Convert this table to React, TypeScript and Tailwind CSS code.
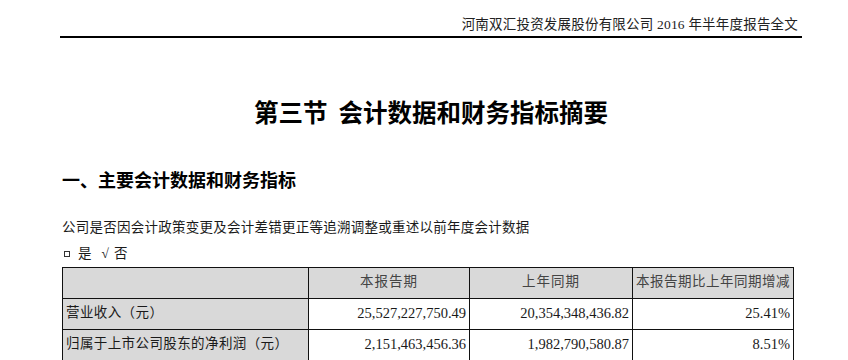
const serif = '"Liberation Serif", "Noto Sans CJK SC", serif';
const hei = '"Noto Sans CJK SC", sans-serif';

const rows = [
  { label: '营业收入（元）', cur: '25,527,227,750.49', prev: '20,354,348,436.82', diff: '25.41%' },
  { label: '归属于上市公司股东的净利润（元）', cur: '2,151,463,456.36', prev: '1,982,790,580.87', diff: '8.51%' },
];

export default function App() {
  return (
    <div className="w-[848px] h-[360px] overflow-hidden bg-white text-[#1a1a1a]" style={{ fontFamily: serif }}>
      <div className="ml-[60px] w-[742px] pt-[16px]">
        <div className="flex justify-end pr-[4px] text-[13.5px] leading-[18px] tracking-[0.2px] text-[#222]">
          河南双汇投资发展股份有限公司 2016 年半年度报告全文
        </div>
        <div className="mt-[2px] h-[1.5px] bg-black" />
      </div>

      <h1
        className="ml-[60px] w-[742px] mt-[58px] text-center text-[24.5px] leading-[32px] font-bold text-black"
        style={{ fontFamily: hei }}
      >
        第三节&nbsp;&nbsp;会计数据和财务指标摘要
      </h1>

      <h2
        className="ml-[62px] mt-[38px] text-[18px] leading-[26px] font-bold text-black"
        style={{ fontFamily: hei }}
      >
        一、主要会计数据和财务指标
      </h2>

      <p className="ml-[62px] mt-[26px] text-[13.5px] leading-[20px] tracking-[0.25px]">
        公司是否因会计政策变更及会计差错更正等追溯调整或重述以前年度会计数据
      </p>

      <div className="ml-[63px] mt-[7px] flex items-center text-[13.5px] leading-[18px]">
        <span className="inline-block w-[6px] h-[6px] border border-[#333] ml-[1px]" />
        <span className="ml-[8px]">是</span>
        <span className="ml-[10px]">√</span>
        <span className="ml-[5px]">否</span>
      </div>

      <table className="ml-[62px] mt-[4px] border-collapse table-fixed w-[731px] text-[13.5px]">
        <colgroup>
          <col className="w-[246px]" />
          <col className="w-[161px]" />
          <col className="w-[163px]" />
          <col className="w-[161px]" />
        </colgroup>
        <thead>
          <tr className="bg-[#d9d9d9] h-[31px] text-[#444]">
            <th className="border border-[#111] font-normal" />
            <th className="border border-[#111] font-normal text-center tracking-[1px]">本报告期</th>
            <th className="border border-[#111] font-normal text-center tracking-[1px]">上年同期</th>
            <th className="border border-[#111] font-normal text-center tracking-[0.5px] whitespace-nowrap">本报告期比上年同期增减</th>
          </tr>
        </thead>
        <tbody>
          {rows.map((r) => (
            <tr key={r.label} className="h-[31px]">
              <td className="border border-[#111] bg-[#d9d9d9] pl-[3px] tracking-[0.4px] whitespace-nowrap overflow-hidden">{r.label}</td>
              <td className="border border-[#111] text-right pr-[3px] text-[14.5px]">{r.cur}</td>
              <td className="border border-[#111] text-right pr-[3px] text-[14.5px]">{r.prev}</td>
              <td className="border border-[#111] text-right pr-[3px] text-[14.5px]">{r.diff}</td>
            </tr>
          ))}
        </tbody>
      </table>
    </div>
  );
}
